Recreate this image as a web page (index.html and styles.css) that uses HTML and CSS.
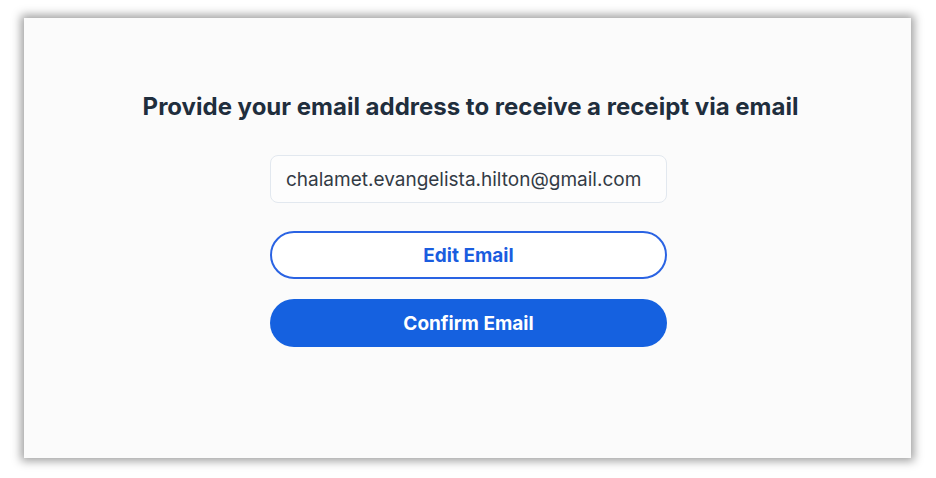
FILE: index.html
```html
<!DOCTYPE html>
<html>
<head>
<meta charset="utf-8">
<link rel="stylesheet" href="styles.css">
</head>
<body>
<div class="card">
  <h1 class="title">Provide your email address to receive a receipt via email</h1>
  <div class="form">
    <div class="email-field">chalamet.evangelista.hilton@gmail.com</div>
    <button class="btn btn-outline">Edit Email</button>
    <button class="btn btn-primary">Confirm Email</button>
  </div>
</div>
</body>
</html>
```
FILE: styles.css
```css
html, body {
  margin: 0;
  padding: 0;
  background: #ffffff;
}
body {
  padding: 18px 25px 20px 24px;
  font-family: Inter, "Noto Sans", sans-serif;
}
.card {
  box-sizing: border-box;
  width: 887px;
  height: 440px;
  background: #fbfbfb;
  box-shadow: 0 0 9px 3px rgba(0, 0, 0, 0.38);
  display: flex;
  flex-direction: column;
  align-items: center;
  padding-top: 74px;
}
.title {
  margin: 0;
  font-size: 24px;
  font-weight: 700;
  color: #1f2e3d;
  letter-spacing: 0;
  line-height: 30px;
  margin-left: 6px;
}
.form {
  width: 397px;
  display: flex;
  flex-direction: column;
  margin-top: 33px;
  margin-left: 2px;
}
.email-field {
  box-sizing: border-box;
  height: 48px;
  border: 1px solid #e2e8ef;
  border-radius: 8px;
  background: #fdfdfd;
  display: flex;
  align-items: center;
  padding-left: 15px;
  font-size: 19px;
  color: #333b45;
}
.btn {
  box-sizing: border-box;
  height: 48px;
  border-radius: 24px;
  font-family: Inter, "Noto Sans", sans-serif;
  font-size: 19px;
  font-weight: 700;
  display: flex;
  align-items: center;
  justify-content: center;
  padding: 0;
}
.btn-outline {
  margin-top: 28px;
  background: #ffffff;
  border: 2px solid #2a63e3;
  color: #1a5ddf;
}
.btn-primary {
  margin-top: 20px;
  background: #1561e0;
  border: none;
  color: #ffffff;
}
```
